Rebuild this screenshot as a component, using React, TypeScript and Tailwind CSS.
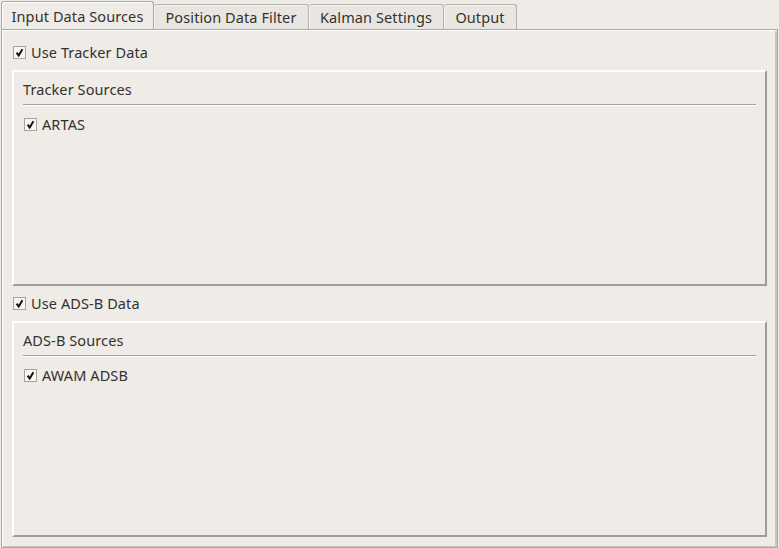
import React from "react";

const font = { fontFamily: '"Noto Sans", "DejaVu Sans", sans-serif' };

const CheckBox = () => (
  <span className="inline-flex h-[13px] w-[13px] shrink-0 items-center justify-center border border-[#a6a29c] bg-[#f7f6f4]">
    <svg width="9" height="9" viewBox="0 0 9 9">
      <path d="M1.6 4.6 L3.7 7.5 L7.4 1.2" fill="none" stroke="#111" strokeWidth="2" />
    </svg>
  </span>
);

const CheckRow = ({ label, className }: { label: string; className?: string }) => (
  <div className={"flex h-[22px] items-center gap-[5px] " + (className ?? "")}>
    <CheckBox />
    <span className="pt-[2px]">{label}</span>
  </div>
);

const Group = ({ title, item }: { title: string; item: string }) => (
  <div className="h-[216px] w-[755px] border-2 border-t-white border-l-white border-r-[#a09c97] border-b-[#a09c97] px-[9px] pt-[7px]">
    <div className="h-[20px] leading-[20px]">{title}</div>
    <div className="mt-[5px] h-[2px] border-t border-t-[#a5a19c] border-b border-b-white" />
    <div className="mt-[8px] flex h-[20px] items-center gap-[5px] pl-[1px]">
      <CheckBox />
      <span className="pt-[1px]">{item}</span>
    </div>
  </div>
);

const tabs = ["Position Data Filter", "Kalman Settings", "Output"];

export default function App() {
  return (
    <div className="h-[548px] w-[779px] bg-[#efebe7] text-[14.5px] tracking-[0.1px] text-[#33322e]" style={font}>
      <div className="flex h-[29px] items-end pl-[1px] pt-[2px]">
        <div className="relative z-10 flex h-[28px] w-[153px] items-center justify-center rounded-t-[3px] border border-b-0 border-[#aaa6a0] bg-[#efebe7] pt-[2px] shadow-[inset_1px_1px_0_white]">
          Input Data Sources
        </div>
        <div className="flex h-[25px] w-[155px] items-center justify-center rounded-t-[3px] border border-b-0 border-l-0 border-[#b4b0aa] bg-[#e9e6e1] pt-[2px] shadow-[inset_1px_1px_0_#f6f4f1]">
          {tabs[0]}
        </div>
        <div className="flex h-[25px] w-[135px] items-center justify-center rounded-t-[3px] border border-b-0 border-l-0 border-[#b4b0aa] bg-[#e9e6e1] pt-[2px] shadow-[inset_1px_1px_0_#f6f4f1]">
          {tabs[1]}
        </div>
        <div className="flex h-[25px] w-[73px] items-center justify-center rounded-t-[3px] border border-b-0 border-l-0 border-[#b4b0aa] bg-[#e9e6e1] pt-[2px] shadow-[inset_1px_1px_0_#f6f4f1]">
          {tabs[2]}
        </div>
      </div>
      <div className="ml-[1px] h-[519px] w-[777px] border border-[#aaa6a0] shadow-[inset_1px_1px_0_white,inset_-2px_-1px_0_#c8c4be] pl-[10px] pt-[11px]">
        <CheckRow label="Use Tracker Data" className="pl-[1px]" />
        <div className="mt-[7px]">
          <Group title="Tracker Sources" item="ARTAS" />
        </div>
        <CheckRow label="Use ADS-B Data" className="mt-[6px] pl-[1px]" />
        <div className="mt-[7px]">
          <Group title="ADS-B Sources" item="AWAM ADSB" />
        </div>
      </div>
    </div>
  );
}
